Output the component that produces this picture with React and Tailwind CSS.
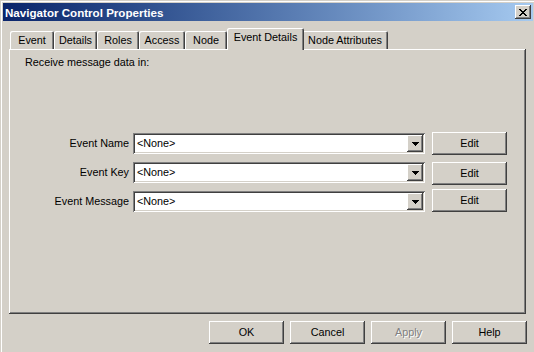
import React from "react";

const raised =
  "shadow-[inset_-1px_-1px_#404040,inset_1px_1px_#ffffff,inset_-2px_-2px_#808080]";
const sunken =
  "shadow-[inset_1px_1px_#808080,inset_-1px_-1px_#ffffff,inset_2px_2px_#404040,inset_-2px_-2px_#D4D0C8]";

function Tab({ label, w, active }) {
  if (active) {
    return (
      <div
        className="relative z-10 mr-[-2px] mb-[-1px] h-[22px] w-[77px] rounded-t-[2px] bg-[#D4D0C8] shadow-[inset_1px_1px_#ffffff,inset_-1px_0_#404040,inset_-2px_0_#808080] flex justify-center pt-[3px]"
      >
        <span>{label}</span>
      </div>
    );
  }
  return (
    <div
      className="h-[18px] rounded-t-[2px] bg-[#D4D0C8] shadow-[inset_1px_1px_#ffffff,inset_-1px_0_#404040,inset_-2px_0_#808080] flex justify-center pt-[3px]"
      style={{ width: w }}
    >
      <span>{label}</span>
    </div>
  );
}

function Arrow() {
  return (
    <svg width="7" height="4" viewBox="0 0 7 4" shapeRendering="crispEdges">
      <rect x="0" y="0" width="7" height="1" fill="#000" />
      <rect x="1" y="1" width="5" height="1" fill="#000" />
      <rect x="2" y="2" width="3" height="1" fill="#000" />
      <rect x="3" y="3" width="1" height="1" fill="#000" />
    </svg>
  );
}

function Combo() {
  return (
    <div className={`h-[21px] w-[292px] bg-white ${sunken} flex items-center p-[2px]`}>
      <div className="flex-1 pl-[2px] leading-[17px]">&lt;None&gt;</div>
      <div className={`h-[17px] w-[16px] bg-[#D4D0C8] ${raised} flex items-center justify-center pt-[1px]`}>
        <Arrow />
      </div>
    </div>
  );
}

function Btn({ label, disabled, extra = "" }) {
  return (
    <div
      className={`h-[23px] w-[75px] bg-[#D4D0C8] ${raised} flex items-center justify-center ${extra}`}
    >
      <span
        className={
          disabled ? "text-[#808080] [text-shadow:1px_1px_0_#ffffff]" : ""
        }
      >
        {label}
      </span>
    </div>
  );
}

function Row({ label, comboMt, mt }) {
  return (
    <div className="flex items-start" style={{ marginTop: mt }}>
      <div
        className="w-[120px] h-[21px] flex items-center justify-end"
        style={{ marginTop: comboMt }}
      >
        {label}
      </div>
      <div className="ml-[4px]" style={{ marginTop: comboMt }}>
        <Combo />
      </div>
      <Btn label="Edit" extra="ml-[7px]" />
    </div>
  );
}

export default function App() {
  return (
    <div
      className="w-[534px] h-[352px] overflow-hidden bg-[#D4D0C8] text-[10.8px] leading-[13px] text-black shadow-[inset_1px_1px_#D4D0C8,inset_2px_2px_#ffffff] pt-[3px]"
      style={{ fontFamily: '"Liberation Sans", Arial, sans-serif' }}
    >
      {/* Title bar */}
      <div className="ml-[3px] mr-[1px] h-[18px] bg-gradient-to-r from-[#0A246A] to-[#A6CAF0] flex items-center justify-between pl-[2px] pr-[2px]">
        <span className="text-white font-bold text-[11.6px]">Navigator Control Properties</span>
        <div className={`h-[14px] w-[16px] bg-[#D4D0C8] ${raised} flex items-center justify-center`}>
          <svg width="8" height="7" viewBox="0 0 8 7" shapeRendering="crispEdges">
            {[0, 1, 2, 3, 4, 5, 6].map((i) => (
              <g key={i}>
                <rect x={i} y={i} width="2" height="1" fill="#000" />
                <rect x={6 - i} y={i} width="2" height="1" fill="#000" />
              </g>
            ))}
          </svg>
        </div>
      </div>

      {/* Tabs */}
      <div className="mt-[7px] ml-[10px] h-[21px] flex items-end">
        <Tab label="Event" w={44} />
        <Tab label="Details" w={43} />
        <Tab label="Roles" w={42} />
        <Tab label="Access" w={46} />
        <Tab label="Node" w={42} />
        <Tab label="Event Details" active />
        <Tab label="Node Attributes" w={86} />
      </div>

      {/* Panel */}
      <div className="ml-[9px] w-[517px] h-[265px] shadow-[inset_-1px_-1px_#404040,inset_1px_1px_#ffffff,inset_-2px_-2px_#808080] flex flex-col">
        <div className="pl-[16px] pt-[7px]">Receive message data in:</div>
        <div className="mt-[63px] flex flex-col">
          <Row label="Event Name" comboMt={1} mt={0} />
          <Row label="Event Key" comboMt={0} mt={7} />
          <Row label="Event Message" comboMt={2} mt={4} />
        </div>
      </div>

      {/* Bottom buttons */}
      <div className="mt-[7px] pr-[7px] flex justify-end gap-[6px]">
        <Btn label="OK" />
        <Btn label="Cancel" />
        <Btn label="Apply" disabled />
        <Btn label="Help" />
      </div>
    </div>
  );
}
